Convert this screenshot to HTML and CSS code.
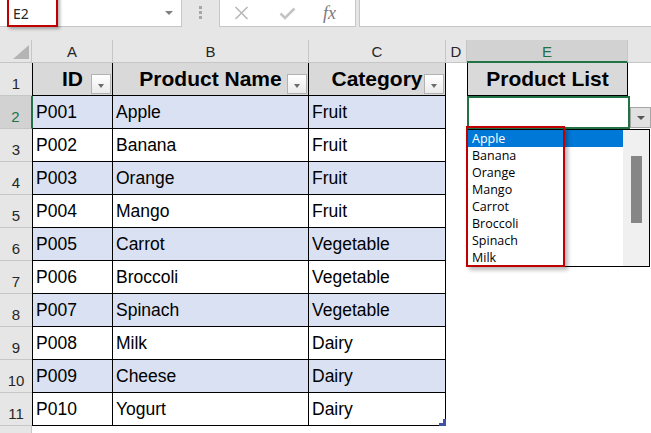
FILE: index.html
```html
<!DOCTYPE html>
<html>
<head>
<meta charset="utf-8">
<link rel="stylesheet" href="styles.css">
</head>
<body>
<div class="toolbar">
  <div class="namebox">
    <span class="nb-text">E2</span>
    <span class="nb-arrow"></span>
    <div class="nb-mark"></div>
  </div>
  <div class="grip"><span></span><span></span><span></span></div>
  <div class="fbtns">
    <svg class="ico-x" width="15" height="14" viewBox="0 0 15 14"><path d="M1.5 1 L13.5 13 M13.5 1 L1.5 13" stroke="#b8b8b8" stroke-width="1.6" fill="none"/></svg>
    <svg class="ico-ok" width="17" height="13" viewBox="0 0 17 13"><path d="M1.5 6.5 L6 11 L15.5 1.5" stroke="#c4c4c4" stroke-width="2.6" fill="none"/></svg>
    <span class="fx">fx</span>
  </div>
  <div class="finput"></div>
</div>

<div class="sheet">
  <!-- column headers -->
  <div class="ch corner"><svg class="tri" width="16" height="14" viewBox="0 0 16 14"><path d="M16 0 V14 H0 Z" fill="#b4b4b4"/></svg></div>
  <div class="ch">A</div>
  <div class="ch">B</div>
  <div class="ch">C</div>
  <div class="ch">D</div>
  <div class="ch sel-ch">E</div>
  <div class="ch last"></div>

  <!-- row 1 -->
  <div class="rh">1</div>
  <div class="t a hd">ID<span class="fbtn"></span></div>
  <div class="t hd">Product Name<span class="fbtn"></span></div>
  <div class="t hd">Category<span class="fbtn"></span></div>
  <div class="blank"></div>
  <div class="e1">Product List</div>
  <div class="blank"></div>

  <!-- row 2 -->
  <div class="rh sel-rh">2</div>
  <div class="t a g blue">P001</div>
  <div class="t blue">Apple</div>
  <div class="t blue">Fruit</div>
  <div class="blank"></div>
  <div class="e2">
    <div class="sel"></div>
    <div class="ddbtn"><span></span></div>
    <div class="list">
      <div class="items">
        <div class="item on">Apple</div>
        <div class="item">Banana</div>
        <div class="item">Orange</div>
        <div class="item">Mango</div>
        <div class="item">Carrot</div>
        <div class="item">Broccoli</div>
        <div class="item">Spinach</div>
        <div class="item">Milk</div>
      </div>
      <div class="sbar"><div class="thumb"></div></div>
    </div>
    <div class="redbox"></div>
  </div>
  <div class="blank"></div>

  <!-- row 3 -->
  <div class="rh">3</div>
  <div class="t a">P002</div>
  <div class="t">Banana</div>
  <div class="t">Fruit</div>
  <div class="blank"></div><div class="blank"></div><div class="blank"></div>

  <!-- row 4 -->
  <div class="rh">4</div>
  <div class="t a blue">P003</div>
  <div class="t blue">Orange</div>
  <div class="t blue">Fruit</div>
  <div class="blank"></div><div class="blank"></div><div class="blank"></div>

  <!-- row 5 -->
  <div class="rh">5</div>
  <div class="t a">P004</div>
  <div class="t">Mango</div>
  <div class="t">Fruit</div>
  <div class="blank"></div><div class="blank"></div><div class="blank"></div>

  <!-- row 6 -->
  <div class="rh">6</div>
  <div class="t a blue">P005</div>
  <div class="t blue">Carrot</div>
  <div class="t blue">Vegetable</div>
  <div class="blank"></div><div class="blank"></div><div class="blank"></div>

  <!-- row 7 -->
  <div class="rh">7</div>
  <div class="t a">P006</div>
  <div class="t">Broccoli</div>
  <div class="t">Vegetable</div>
  <div class="blank"></div><div class="blank"></div><div class="blank"></div>

  <!-- row 8 -->
  <div class="rh">8</div>
  <div class="t a blue">P007</div>
  <div class="t blue">Spinach</div>
  <div class="t blue">Vegetable</div>
  <div class="blank"></div><div class="blank"></div><div class="blank"></div>

  <!-- row 9 -->
  <div class="rh">9</div>
  <div class="t a">P008</div>
  <div class="t">Milk</div>
  <div class="t">Dairy</div>
  <div class="blank"></div><div class="blank"></div><div class="blank"></div>

  <!-- row 10 -->
  <div class="rh">10</div>
  <div class="t a blue">P009</div>
  <div class="t blue">Cheese</div>
  <div class="t blue">Dairy</div>
  <div class="blank"></div><div class="blank"></div><div class="blank"></div>

  <!-- row 11 -->
  <div class="rh">11</div>
  <div class="t a">P010</div>
  <div class="t">Yogurt</div>
  <div class="t handle-cell">Dairy<svg class="handle" width="7" height="7" viewBox="0 0 7 7"><path d="M4 0 H7 V7 H0 V4 H4 Z" fill="#3f51a8"/></svg></div>
  <div class="blank"></div><div class="blank"></div><div class="blank"></div>

  <!-- row 12 (partial) -->
  <div class="rh rh-last"></div>
  <div class="blank"></div><div class="blank"></div><div class="blank"></div>
  <div class="blank"></div><div class="blank"></div><div class="blank"></div>
</div>
</body>
</html>
```

FILE: styles.css
```css
* { box-sizing: border-box; }

body {
  margin: 0;
  width: 651px;
  height: 433px;
  overflow: hidden;
  background: #ffffff;
  font-family: "Liberation Sans", Arial, sans-serif;
  color: #000;
}

/* ---------- formula bar ---------- */
.toolbar {
  display: flex;
  align-items: flex-start;
  height: 40px;
  background: #e6e6e6;
}

.namebox {
  position: relative;
  width: 182px;
  height: 27px;
  background: #fff;
  border-right: 1px solid #c6c6c6;
  border-bottom: 1px solid #c6c6c6;
  display: flex;
  align-items: center;
  padding-left: 13px;
}

.nb-text {
  font-family: "Noto Sans", sans-serif;
  font-size: 14px;
  color: #262626;
}

.nb-arrow {
  margin-left: auto;
  margin-right: 8px;
  width: 0;
  height: 0;
  border-left: 4px solid transparent;
  border-right: 4px solid transparent;
  border-top: 4px solid #7f7f7f;
}

.nb-mark {
  position: absolute;
  left: 7px;
  top: -4px;
  width: 51px;
  height: 31px;
  border: 2px solid #c00000;
  box-shadow: 2px 2px 3px rgba(0, 0, 0, 0.3);
}

.grip {
  width: 37px;
  height: 27px;
  display: flex;
  flex-direction: column;
  align-items: center;
  gap: 2px;
  padding-top: 6px;
}
.grip span {
  width: 3px;
  height: 3px;
  background: #a6a6a6;
}

.fbtns {
  width: 137px;
  height: 27px;
  background: #fff;
  border: 1px solid #c6c6c6;
  border-top: 0;
  display: flex;
  align-items: center;
  padding-left: 14px;
}
.ico-x { margin-right: 30px; }
.ico-ok { margin-right: 27px; margin-top: 1px; }
.fx {
  font-family: "Liberation Serif", "Times New Roman", serif;
  font-style: italic;
  font-size: 18px;
  color: #7a7a7a;
  line-height: 1;
}

.finput {
  flex: 1;
  margin-left: 3px;
  height: 27px;
  background: #fff;
  border-left: 1px solid #c6c6c6;
  border-bottom: 1px solid #c6c6c6;
}

/* ---------- sheet grid ---------- */
.sheet {
  display: grid;
  grid-template-columns: 32px 81px 196px 137px 21px 161px 23px;
  grid-template-rows: 23px repeat(11, 33px) 7px;
}

.ch {
  background: #e6e6e6;
  border-right: 1px solid #c6c6c6;
  border-bottom: 1px solid #c6c6c6;
  display: flex;
  align-items: center;
  justify-content: center;
  font-size: 15px;
  color: #262626;
  padding-top: 1px;
}
.ch.last { border-right: 0; }
.corner { position: relative; }
.tri { position: absolute; right: 2px; bottom: 3px; }

.sel-ch {
  background: #d2d2d2;
  color: #217346;
  border-bottom: 2px solid #217346;
}

.rh {
  background: #e6e6e6;
  border-bottom: 1px solid #c6c6c6;
  display: flex;
  align-items: flex-end;
  justify-content: center;
  font-size: 15px;
  line-height: 18px;
  padding-bottom: 2px;
  color: #262626;
}
.rh-last { border-bottom: 0; border-right: 1px solid #c6c6c6; }
.sel-rh {
  background: #d2d2d2;
  color: #217346;
  border-right: 1px solid #217346;
}

.t {
  border-right: 1px solid #000;
  border-bottom: 1px solid #000;
  display: flex;
  align-items: center;
  padding-left: 3px;
  font-size: 17.5px;
  white-space: nowrap;
}
.t.a { border-left: 1px solid #000; }
.t.a.g { border-left-color: #217346; }
.blue { background: #d9e1f2; }

.hd {
  position: relative;
  background: #d9d9d9;
  font-weight: bold;
  font-size: 21px;
  justify-content: center;
  padding-left: 0;
}

.fbtn {
  position: absolute;
  right: 1px;
  bottom: 1px;
  width: 20px;
  height: 20px;
  border: 1px solid #b3b3b3;
  background: linear-gradient(#ffffff, #ebebeb);
  display: flex;
  align-items: center;
  justify-content: center;
}
.fbtn::after {
  content: "";
  margin-top: 4px;
  width: 0;
  height: 0;
  border-left: 3.5px solid transparent;
  border-right: 3.5px solid transparent;
  border-top: 4px solid #6b6b6b;
}

.handle-cell { position: relative; }
.handle { position: absolute; right: -1px; bottom: -1px; }

.e1 {
  background: #d9d9d9;
  border: 1px solid #000;
  border-top: 0;
  display: flex;
  align-items: center;
  justify-content: center;
  font-weight: bold;
  font-size: 21px;
  white-space: nowrap;
}

/* ---------- selected cell + validation dropdown ---------- */
.e2 { position: relative; z-index: 5; }

.sel {
  position: absolute;
  left: 0;
  top: 0;
  width: 163px;
  height: 33px;
  border: 2px solid #217346;
}

.ddbtn {
  position: absolute;
  left: 163px;
  top: 11px;
  width: 21px;
  height: 21px;
  background: #e1e1e1;
  border: 1px solid #a6a6a6;
  display: flex;
  align-items: center;
  justify-content: center;
}
.ddbtn span {
  width: 0;
  height: 0;
  border-left: 4px solid transparent;
  border-right: 4px solid transparent;
  border-top: 4px solid #555;
}

.list {
  position: absolute;
  left: -1px;
  top: 33px;
  width: 184px;
  height: 138px;
  background: #fff;
  border: 1px solid #000;
  display: flex;
}
.items { flex: 1; }
.item {
  height: 17px;
  line-height: 17px;
  padding-left: 5px;
  font-family: "Open Sans", "Noto Sans", sans-serif;
  font-size: 12.5px;
  color: #000;
}
.item.on { background: #0078d7; color: #fff; }

.sbar {
  width: 26px;
  background: #f0f0f0;
  padding: 26px 7px 0 8px;
}
.thumb {
  height: 67px;
  background: #868686;
}

.redbox {
  position: absolute;
  left: -1px;
  top: 30px;
  width: 99px;
  height: 141px;
  border: 2px solid #c00000;
  box-shadow: 3px 3px 4px rgba(0, 0, 0, 0.28);
}
```
